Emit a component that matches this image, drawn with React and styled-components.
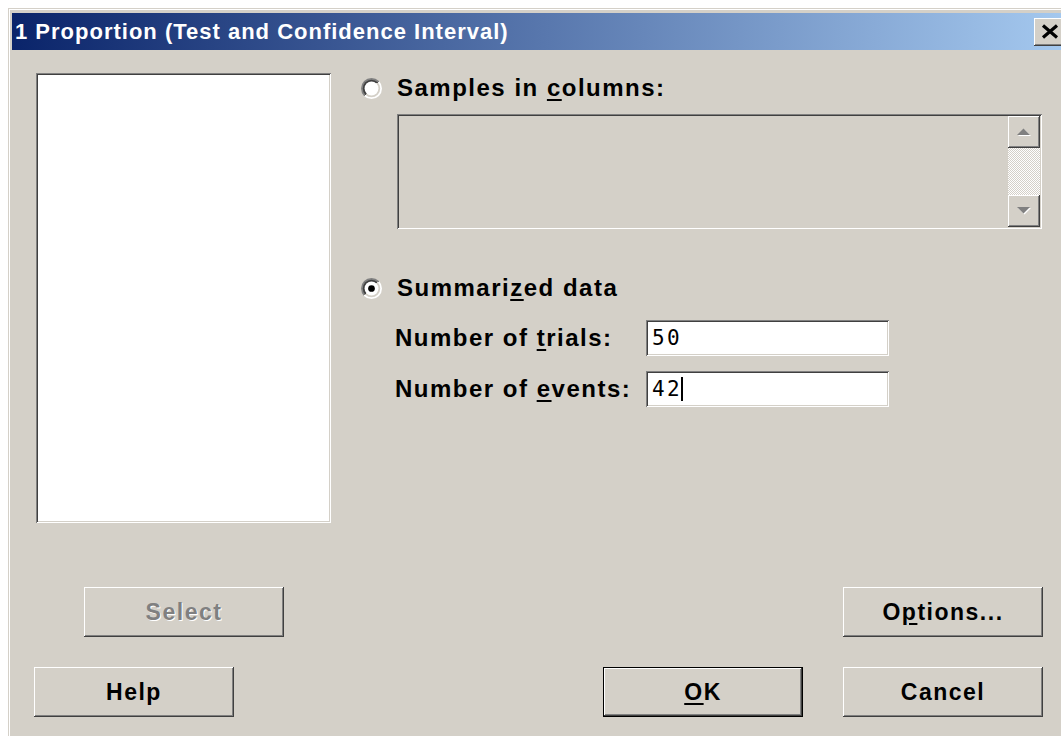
import React from 'react'
import styled, { createGlobalStyle, css } from 'styled-components'

const face = '#d4d0c8'
const shadow = '#808080'
const darkShadow = '#404040'
const highlight = '#ffffff'

const GlobalStyle = createGlobalStyle`
  html, body {
    margin: 0;
    padding: 0;
    overflow: hidden;
    background: #ffffff;
  }
  body {
    font-family: "Liberation Sans", Arial, sans-serif;
  }
`

const raised = css`
  box-shadow:
    inset -1px -1px 0 ${darkShadow},
    inset 1px 1px 0 ${highlight},
    inset -2px -2px 0 ${shadow},
    inset 2px 2px 0 ${face};
`

const sunken = css`
  box-shadow:
    inset 1px 1px 0 ${shadow},
    inset -1px -1px 0 ${highlight},
    inset 2px 2px 0 ${darkShadow},
    inset -2px -2px 0 ${face};
`

const Window = styled.div`
  margin: 8px 0 0 8px;
  width: 1070px;
  height: 760px;
  padding: 4px;
  box-sizing: border-box;
  background: ${face};
  box-shadow: inset 1px 1px 0 ${face}, inset 2px 2px 0 ${highlight};
  display: flex;
  flex-direction: column;
`

const TitleBar = styled.div`
  height: 37px;
  margin-top: 1px;
  display: flex;
  align-items: center;
  justify-content: space-between;
  padding: 0 8px 0 3px;
  background: linear-gradient(90deg, #0a246a 0%, #a6caf0 100%);
`

const Title = styled.span`
  color: #ffffff;
  font-size: 22px;
  font-weight: bold;
  letter-spacing: 1px;
  white-space: nowrap;
`

const CloseButton = styled.div`
  width: 32px;
  height: 28px;
  background: ${face};
  ${raised};
  display: flex;
  align-items: center;
  justify-content: center;
`

const Body = styled.div`
  display: flex;
  flex-direction: column;
  padding: 23px 31px 0 0;
`

const TopArea = styled.div`
  display: flex;
  gap: 30px;
  padding-left: 24px;
`

const ListBox = styled.div`
  width: 295px;
  height: 450px;
  background: #ffffff;
  ${sunken};
`

const RightCol = styled.div`
  flex: 1;
  display: flex;
  flex-direction: column;
  padding-top: 1px;
`

const Label = styled.span`
  font-size: 24px;
  line-height: 28px;
  font-weight: bold;
  letter-spacing: 1.5px;
  color: #000;
  white-space: nowrap;

  u {
    text-decoration-thickness: 2px;
    text-underline-offset: 3px;
  }
`

const RadioRow = styled.label`
  display: flex;
  align-items: center;
  gap: 15px;
  height: 28px;
  margin-top: ${p => p.$top || 0}px;
`

const ColumnsBox = styled.div`
  margin: 12px 0 0 36px;
  width: 645px;
  height: 115px;
  box-sizing: border-box;
  padding: 2px;
  background: ${face};
  ${sunken};
  display: flex;
  justify-content: flex-end;
`

const ScrollBar = styled.div`
  width: 32px;
  display: flex;
  flex-direction: column;
`

const ScrollButton = styled.div`
  height: 32px;
  background: ${face};
  ${raised};
  display: flex;
  align-items: center;
  justify-content: center;
`

const ScrollTrack = styled.div`
  flex: 1;
  background: repeating-conic-gradient(#ffffff 0 25%, ${face} 0 50%) 0 0 / 2px 2px;
`

const FieldRow = styled.div`
  display: grid;
  grid-template-columns: 251px 243px;
  align-items: center;
  margin: ${p => p.$top}px 0 0 34px;
`

const TextField = styled.div`
  height: 36px;
  box-sizing: border-box;
  background: #ffffff;
  ${sunken};
  padding: 0 6px;
  display: flex;
  align-items: center;
  font-family: "DejaVu Sans Mono", "Liberation Mono", monospace;
  font-size: 21px;
  letter-spacing: 2.4px;
  color: #000;
`

const Caret = styled.span`
  display: inline-block;
  width: 2px;
  height: 24px;
  margin-left: -1px;
  background: #000;
`

const ButtonArea = styled.div`
  display: flex;
  flex-direction: column;
  gap: 30px;
  margin-top: 64px;
`

const ButtonRow = styled.div`
  display: flex;
  align-items: center;
  padding-left: ${p => p.$indent}px;
`

const Button = styled.div`
  width: 200px;
  height: 50px;
  box-sizing: border-box;
  display: flex;
  align-items: center;
  justify-content: center;
  background: ${face};
  ${raised};
  font-size: 23px;
  font-weight: bold;
  letter-spacing: 1.5px;
  color: ${p => (p.$disabled ? shadow : '#000')};
  text-shadow: ${p => (p.$disabled ? `1px 1px 0 ${highlight}` : 'none')};
  margin-left: ${p => p.$gap || 0};

  ${p => p.$default && css`
    box-shadow:
      inset 0 0 0 1px #000,
      inset -2px -2px 0 ${darkShadow},
      inset 2px 2px 0 ${highlight},
      inset -3px -3px 0 ${shadow},
      inset 3px 3px 0 ${face};
  `}

  u {
    text-decoration-thickness: 2px;
    text-underline-offset: 3px;
  }
`

const Radio = ({ checked }) => (
  <svg width="21" height="21" viewBox="0 0 20 20">
    <defs>
      <linearGradient id="ring-outer" x1="0" y1="0" x2="1" y2="1">
        <stop offset="0.5" stopColor={shadow} />
        <stop offset="0.5" stopColor={highlight} />
      </linearGradient>
      <linearGradient id="ring-inner" x1="0" y1="0" x2="1" y2="1">
        <stop offset="0.5" stopColor={darkShadow} />
        <stop offset="0.5" stopColor={face} />
      </linearGradient>
    </defs>
    <circle cx="10" cy="10" r="10" fill="url(#ring-outer)" />
    <circle cx="10" cy="10" r="8.3" fill="url(#ring-inner)" />
    <circle cx="10" cy="10" r="6.6" fill="#ffffff" />
    {checked && <circle cx="10" cy="10" r="3.2" fill="#000" />}
  </svg>
)

// greyed scroll arrows with the white emboss below
const Arrow = ({ up }) => (
  <svg width="18" height="12" viewBox="0 0 18 12">
    <path d={up ? 'M3 10h13L9.5 3.5z' : 'M3 3h13L9.5 9.5z'} fill={highlight} />
    <path d={up ? 'M2 9h13L8.5 2.5z' : 'M2 2h13L8.5 8.5z'} fill={shadow} />
  </svg>
)

const CloseGlyph = () => (
  <svg width="18" height="15" viewBox="0 0 18 15">
    <path d="M2 1.5l14 12M16 1.5L2 13.5" stroke="#000" strokeWidth="3.2" />
  </svg>
)

export default function App() {
  return (
    <>
      <GlobalStyle />
      <Window>
        <TitleBar>
          <Title>1 Proportion (Test and Confidence Interval)</Title>
          <CloseButton>
            <CloseGlyph />
          </CloseButton>
        </TitleBar>

        <Body>
          <TopArea>
            <ListBox />
            <RightCol>
              <RadioRow>
                <Radio />
                <Label>Samples in <u>c</u>olumns:</Label>
              </RadioRow>
              <ColumnsBox>
                <ScrollBar>
                  <ScrollButton><Arrow up /></ScrollButton>
                  <ScrollTrack />
                  <ScrollButton><Arrow /></ScrollButton>
                </ScrollBar>
              </ColumnsBox>

              <RadioRow $top={45}>
                <Radio checked />
                <Label>Summari<u>z</u>ed data</Label>
              </RadioRow>

              <FieldRow $top={18}>
                <Label>Number of <u>t</u>rials:</Label>
                <TextField>50</TextField>
              </FieldRow>
              <FieldRow $top={15}>
                <Label>Number of <u>e</u>vents:</Label>
                <TextField>42<Caret /></TextField>
              </FieldRow>
            </RightCol>
          </TopArea>

          <ButtonArea>
            <ButtonRow $indent={72}>
              <Button $disabled>Select</Button>
              <Button $gap="auto">O<u>p</u>tions...</Button>
            </ButtonRow>
            <ButtonRow $indent={22}>
              <Button>Help</Button>
              <Button $gap="auto" $default><u>O</u>K</Button>
              <Button $gap="40px">Cancel</Button>
            </ButtonRow>
          </ButtonArea>
        </Body>
      </Window>
    </>
  )
}
